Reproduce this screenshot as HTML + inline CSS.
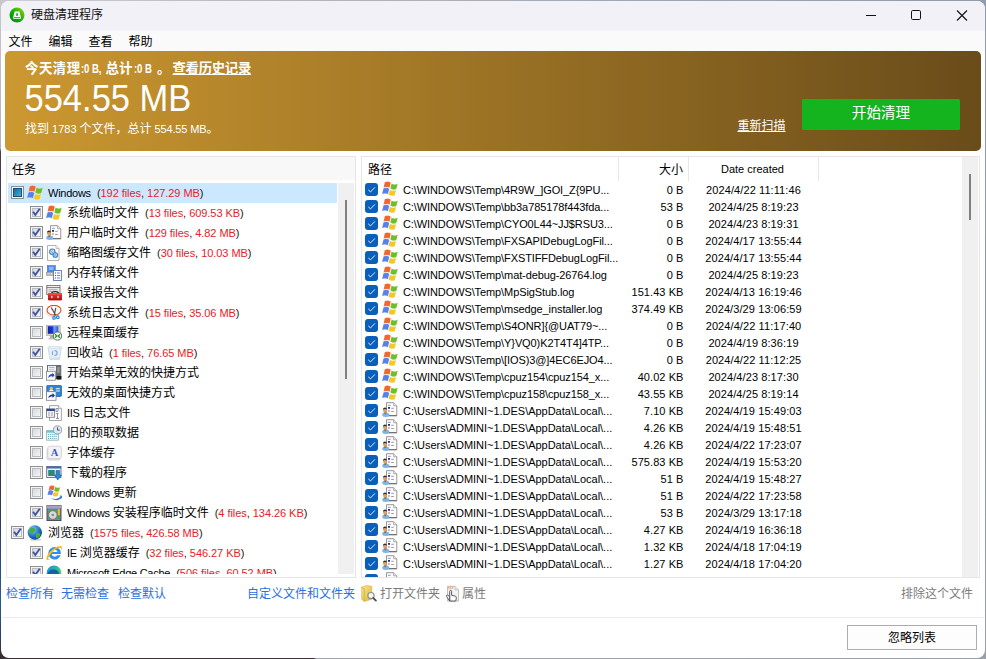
<!DOCTYPE html>
<html lang="zh-CN"><head><meta charset="utf-8"><title>硬盘清理程序</title>
<style>
html,body{margin:0;padding:0}
body{width:986px;height:659px;overflow:hidden;position:relative;background:#8e9cae;font-family:"Liberation Sans","Noto Sans CJK SC",sans-serif;font-size:12px;color:#000}
#bgt{position:absolute;left:0;top:0;width:986px;height:10px;background:linear-gradient(90deg,#cfcfd2 0,#b4b6bc 30%,#9aa4b6 70%,#8e9cb0 100%)}
#bgl{position:absolute;left:0;top:0;width:10px;height:659px;background:linear-gradient(180deg,#c8c8cc 0,#b2b2b6 148px,#4a3c48 152px,#3c3040 400px,#2c3a60 520px,#2a5a90 600px,#2c3c62 640px,#3a2e34 659px)}
#bgr{position:absolute;left:976px;top:10px;width:10px;height:649px;background:linear-gradient(180deg,#8e9cb0 0,#82969e 60%,#9aa0a6 100%)}
#bgb{position:absolute;left:0;top:649px;width:986px;height:10px;background:linear-gradient(90deg,#3a2e34 0,#40323a 314px,#a2a4aa 316px,#9aa0a8 100%)}
#win{position:absolute;left:1px;top:1px;width:984px;height:657px;background:#fff;border-radius:8px;overflow:hidden}
#win *{box-sizing:border-box}
.abs{position:absolute;white-space:nowrap}
#tb{left:0;top:0;width:984px;height:30px;background:#f3f1f8}
#mb{left:0;top:30px;width:984px;height:20px;background:#fafafa}
#title{left:30px;top:6px;font-size:12px;line-height:16px;color:#111}
.mi{margin-left:-.5px;top:33px;font-size:12px;line-height:16px}
#ban{left:4px;top:50px;width:976px;height:100px;border-radius:5px;background:linear-gradient(90deg,#cc9830,#6a4c1a);color:#fff}
.l{font-size:11px}
#b1{left:20px;top:10px;font-weight:bold;font-size:13.400px;line-height:16px}
#b1 span,#b1 a{position:absolute;top:0;white-space:nowrap}
#b1 .l{letter-spacing:-.1px;font-size:12px;transform:scaleX(.8);transform-origin:0 50%}
#b1 a{text-decoration:underline;letter-spacing:-.3px}
#b2{left:19.500px;top:28px;font-size:34.500px;line-height:40px;letter-spacing:0;transform:scaleY(1.09);transform-origin:0 80%}
#b3{left:20px;top:70px;font-size:12px;line-height:16px}
#rescan{left:732.500px;top:67px;font-size:12px;line-height:16px;text-decoration:underline}
#go{left:797px;top:48px;width:158px;height:31px;border-radius:1.500px;background:#14b41f;font-size:14.600px;line-height:29px;text-align:center}
.pane{border:1px solid #e6e6e6;background:#fff;overflow:hidden}
#lp{left:5px;top:155px;width:350px;height:422px}
#rp{left:360px;top:155px;width:619px;height:422px}
.ic{width:16px;height:16px;position:absolute;display:block}
.tr{position:absolute;left:1px;width:329px;height:20px;font-size:12px;line-height:20px}
.tr.sel{background:#cce8ff}
.tr .t{position:absolute;top:0;white-space:nowrap}
.tr .t>.l{letter-spacing:-.25px}
.tr .t>.cnt{color:#1a1a1a;letter-spacing:-.05px}
.red{color:#e8202a}
.cbl{position:absolute;top:3px;width:13px;height:13px;border:1px solid #8e8f8f;background:#f4f4f4}
.cbl:before{content:"";box-sizing:border-box;position:absolute;left:1px;top:1px;width:9px;height:9px;border:1px solid #b9bcc0;background:linear-gradient(135deg,#d6d9dc,#f4f5f6)}
.cbl svg{position:absolute;left:-1px;top:-1px}
.cbl .tri{position:absolute;left:1px;top:1px;width:9px;height:9px;background:linear-gradient(135deg,#1e6aa0,#3fb0d8);border:1px solid #1c4f78}
.fr{position:absolute;left:0;width:600px;height:17px;font-size:11px;line-height:17px}
.fr span{position:absolute;top:1px;white-space:nowrap}
.fr .p{letter-spacing:-.1px}
.fr .pu{letter-spacing:-.02px}
.fr .s{letter-spacing:.07px}
.fr .d{letter-spacing:.09px}
.cbr{position:absolute;left:3px;top:2px;width:13px;height:13px;border-radius:3px;background:#0a5fba}
.cbr svg{position:absolute;left:0;top:0}
.lnk{top:585px;font-size:12px;line-height:16px;color:#2a70df}
.gl{top:585px;font-size:12px;line-height:16px;color:#7c7c7c}
</style></head><body>
<div id="bgt"></div><div id="bgr"></div><div id="bgl"></div><div id="bgb"></div>
<div id="win">
<div id="tb" class="abs"></div>
<div id="mb" class="abs"></div>
<svg class="abs" style="left:8px;top:6px" width="17" height="17" viewBox="0 0 17 17"><defs><linearGradient id="ag" x1="0" y1="1" x2="1" y2="0"><stop offset="0" stop-color="#008a00"/><stop offset=".45" stop-color="#0faa08"/><stop offset="1" stop-color="#9ad80c"/></linearGradient></defs><circle cx="8" cy="8" r="7.500" fill="url(#ag)"/><path d="M5.600 4.400h4.900l1.500 6.600q.1.700-.6.700H4.700q-.7 0-.6-.7z" fill="#fff"/><path d="M7 8.700c-.3-.4.200-.7.300-1.200.1-1 .1-1.700.8-1.700s.7.700.8 1.700c.1.500.6.800.3 1.200z" fill="#12a80a"/><path d="M5 10.500h6.200" stroke="#12a80a" stroke-width=".8"/></svg>
<div id="title" class="abs">硬盘清理程序</div>
<svg class="abs" style="left:860px;top:5px" width="120" height="20" viewBox="0 0 120 20"><path d="M5 9.500h10" stroke="#111" stroke-width="1"/><rect x="50.500" y="4.500" width="9" height="9" rx="1.200" fill="none" stroke="#111"/><path d="M96 4.500l10 10M106 4.500l-10 10" stroke="#111" stroke-width="1.100"/></svg>
<div class="abs mi" style="left:8px">文件</div><div class="abs mi" style="left:48px">编辑</div><div class="abs mi" style="left:88px">查看</div><div class="abs mi" style="left:128px">帮助</div>
<div id="ban" class="abs">
<div id="b1" class="abs"><span style="left:0;letter-spacing:.5px">今天清理</span><span class="l" style="left:55.500px">:0 B,</span><span style="left:80.500px">总计</span><span class="l" style="left:109px">:0 B</span><span style="left:132px">。</span><a style="left:147.500px">查看历史记录</a></div>
<div id="b2" class="abs">554.55 MB</div>
<div id="b3" class="abs">找到<span class="l"> 1783 </span>个文件，总计<span class="l" style="letter-spacing:-.15px"> 554.55 MB</span>。</div>
<div id="rescan" class="abs">重新扫描</div>
<div id="go" class="abs">开始清理</div>
</div>

<div id="lp" class="abs pane">
<div class="abs" style="left:0;top:0;width:348px;height:23px;background:#f8f8f8"></div>
<div class="abs" style="left:5px;top:5px;font-size:12px;line-height:16px">任务</div>
<div class="abs" style="left:331px;top:26px;width:16px;height:391px;background:#f0f0f0"></div>
<div class="abs" style="left:338px;top:43px;width:2px;height:179px;background:#808080"></div>
<div class="tr sel" style="top:26px">
<span class="cbl" style="left:3px"><i class="tri"></i></span>
<svg class="ic" style="left:19px;top:2px" viewBox="0 0 16 16"><g stroke="#fff" stroke-opacity=".6" stroke-width=".3"><path d="M2.700 1.200C4.500.3 6.500.3 8.800 1.400L7.600 6.800C6 5.800 3.800 5.800 1.600 6.600z" fill="#f0662c"/><path d="M9.500 2.600C11.500 3.800 13.500 3.800 15.800 2.800L14.400 8C12.500 9 10.300 8.800 8.300 7.400z" fill="#6dbd2d"/><path d="M1.400 7.400C3.300 6.500 5.300 6.600 7.300 7.700L6 13.200C4.200 12.200 2 12.100 0 13z" fill="#5680ee"/><path d="M7.900 8.800C9.800 10 12 10 14.100 9L12.800 14.200C10.700 15.200 8.500 15 6.600 13.800z" fill="#f3c821"/></g></svg>
<span class="t" style="left:40px"><span class="l">Windows</span><span class="cnt l">&nbsp; (<span class="red">192 files</span>, <span class="red">127.29 MB</span>)</span></span>
</div>
<div class="tr" style="top:46px">
<span class="cbl" style="left:22px"><svg viewBox="0 0 13 13" width="13" height="13"><path d="M3.100 5.700L5.300 9 9.700 2.700" fill="none" stroke="#3d50a0" stroke-width="1.800"/></svg></span>
<svg class="ic" style="left:38px;top:2px" viewBox="0 0 16 16"><g stroke="#fff" stroke-opacity=".6" stroke-width=".3"><path d="M2.700 1.200C4.500.3 6.500.3 8.800 1.400L7.600 6.800C6 5.800 3.800 5.800 1.600 6.600z" fill="#f0662c"/><path d="M9.500 2.600C11.500 3.800 13.500 3.800 15.800 2.800L14.400 8C12.500 9 10.300 8.800 8.300 7.400z" fill="#6dbd2d"/><path d="M1.400 7.400C3.300 6.500 5.300 6.600 7.300 7.700L6 13.200C4.200 12.200 2 12.100 0 13z" fill="#5680ee"/><path d="M7.900 8.800C9.800 10 12 10 14.100 9L12.800 14.200C10.700 15.200 8.500 15 6.600 13.800z" fill="#f3c821"/></g></svg>
<span class="t" style="left:59px">系统临时文件<span class="cnt l">&nbsp; (<span class="red">13 files</span>, <span class="red">609.53 KB</span>)</span></span>
</div>
<div class="tr" style="top:66px">
<span class="cbl" style="left:22px"><svg viewBox="0 0 13 13" width="13" height="13"><path d="M3.100 5.700L5.300 9 9.700 2.700" fill="none" stroke="#3d50a0" stroke-width="1.800"/></svg></span>
<svg class="ic" style="left:38px;top:2px" viewBox="0 0 16 16"><path d="M4.500.7h7.200l3.100 3.100v9.900H4.500z" fill="#fff" stroke="#8a8a8a" stroke-width=".9"/><path d="M11.700.7v3.100h3.100" fill="#f1f1f1" stroke="#8a8a8a" stroke-width=".7"/><path d="M4.500 13.700h10.300" stroke="#5e5e5e" stroke-width=".9"/><path d="M6 3.300h2.800M9.200 6.300h2.600M9.200 9.500h1.800" stroke="#8a86b8" stroke-width=".9"/><path d="M11 9.500h1" stroke="#f0a020" stroke-width=".9"/><rect x="6" y="5" width="2" height="1.800" fill="#3a2a80"/><rect x="6" y="8.200" width="1.800" height="1.600" fill="#a8a6c8"/><ellipse cx="3.700" cy="12.700" rx="3.500" ry="2.200" fill="#7ab6ee"/><path d="M2.200 10h1.800l-.2 2.200-1.300-.3z" fill="#9a5a20"/><ellipse cx="3" cy="8.200" rx="1.900" ry="2.500" fill="#e0a264"/><path d="M1.100 7.700c-.2-2.700 3.800-2.900 3.900 0-1-1.100-2.800-1.100-3.900 0z" fill="#2a3038"/></svg>
<span class="t" style="left:59px">用户临时文件<span class="cnt l">&nbsp; (<span class="red">129 files</span>, <span class="red">4.82 MB</span>)</span></span>
</div>
<div class="tr" style="top:86px">
<span class="cbl" style="left:22px"><svg viewBox="0 0 13 13" width="13" height="13"><path d="M3.100 5.700L5.300 9 9.700 2.700" fill="none" stroke="#3d50a0" stroke-width="1.800"/></svg></span>
<svg class="ic" style="left:38px;top:2px" viewBox="0 0 16 16"><path d="M1.500.5h8.500l3 3v12h-11.500z" fill="#fdfdfd" stroke="#a9a9a9" stroke-width=".9"/><path d="M10 .5v3h3" fill="#f0f0f0" stroke="#a9a9a9" stroke-width=".7"/><circle cx="6.300" cy="6.700" r="2.700" fill="#d6e8f6" stroke="#3f7fbc" stroke-width="1.100"/><circle cx="9.300" cy="10" r="2.300" fill="#d6e8f6" stroke="#3f7fbc" stroke-width="1.100"/><circle cx="6.300" cy="6.700" r=".9" fill="#fff" stroke="#3f7fbc" stroke-width=".6"/><circle cx="9.300" cy="10" r=".8" fill="#fff" stroke="#3f7fbc" stroke-width=".6"/></svg>
<span class="t" style="left:59px">缩略图缓存文件<span class="cnt l">&nbsp; (<span class="red">30 files</span>, <span class="red">10.03 MB</span>)</span></span>
</div>
<div class="tr" style="top:106px">
<span class="cbl" style="left:22px"><svg viewBox="0 0 13 13" width="13" height="13"><path d="M3.100 5.700L5.300 9 9.700 2.700" fill="none" stroke="#3d50a0" stroke-width="1.800"/></svg></span>
<svg class="ic" style="left:38px;top:2px" viewBox="0 0 16 16"><rect x="1.500" y=".6" width="7.800" height="6.100" fill="#4a8af0" stroke="#3a6ac8" stroke-width=".6"/><rect x="3" y="1.800" width="4.500" height="3.200" fill="#8ab8fa"/><rect x=".6" y="7.300" width="9.400" height="3" fill="#aab2bc" stroke="#7a828c" stroke-width=".5"/><path d="M1.600 8.800h7.400" stroke="#fff" stroke-width=".9" stroke-dasharray="1 .7"/><rect x="7.500" y="5.500" width="7.900" height="10" fill="#fdfdfd" stroke="#5a7ab0" stroke-width=".9"/><path d="M9 8h1M9 10.500h1M9 13h1" stroke="#2a4ad0" stroke-width="1.100"/><path d="M11 8h3M11 10.500h3M11 13h3" stroke="#4a7ae0" stroke-width=".9"/></svg>
<span class="t" style="left:59px">内存转储文件</span>
</div>
<div class="tr" style="top:126px">
<span class="cbl" style="left:22px"><svg viewBox="0 0 13 13" width="13" height="13"><path d="M3.100 5.700L5.300 9 9.700 2.700" fill="none" stroke="#3d50a0" stroke-width="1.800"/></svg></span>
<svg class="ic" style="left:38px;top:2px" viewBox="0 0 16 16"><rect x=".8" y=".4" width="13.200" height="9.300" fill="#f2f2f2" stroke="#6e6e6e" stroke-width=".9"/><path d="M.8 2.600h13.200" stroke="#6e6e6e" stroke-width=".9"/><path d="M2.500 4.800h9M2.500 6.700h4" stroke="#8c8c8c" stroke-width=".8"/><path d="M5.700 8.300c0-2.200 6.700-2.200 6.700 0" fill="none" stroke="#1a1a1a" stroke-width="1.300"/><rect x="2" y="8" width="14" height="7.300" rx="1" fill="#d8201f"/><rect x="2" y="8" width="14" height="2.200" rx="1" fill="#ec4a40"/><rect x="2" y="13.300" width="14" height="2" rx="1" fill="#a81414"/><rect x="5" y="10.800" width="1.500" height="2.300" fill="#e8d8d8"/><rect x="11.300" y="10.800" width="1.500" height="2.300" fill="#e8d8d8"/></svg>
<span class="t" style="left:59px">错误报告文件</span>
</div>
<div class="tr" style="top:146px">
<span class="cbl" style="left:22px"><svg viewBox="0 0 13 13" width="13" height="13"><path d="M3.100 5.700L5.300 9 9.700 2.700" fill="none" stroke="#3d50a0" stroke-width="1.800"/></svg></span>
<svg class="ic" style="left:38px;top:2px" viewBox="0 0 16 16"><ellipse cx="7" cy="8" rx="6" ry="3.600" fill="none" stroke="#f0b8a8" stroke-width=".8"/><ellipse cx="8" cy="5.200" rx="7" ry="4.800" fill="#fff" fill-opacity=".7" stroke="#e04828" stroke-width="1.100"/><path d="M5.200 2.500l4.600 8M9.800 2.800l-1.600 7.700" stroke="#4e4e4e" stroke-width="1.200"/><circle cx="8" cy="12.900" r="1.300" fill="none" stroke="#1a80d0" stroke-width="1.100"/><circle cx="11.800" cy="12.200" r="1.300" fill="none" stroke="#1a80d0" stroke-width="1.100"/></svg>
<span class="t" style="left:59px">系统日志文件<span class="cnt l">&nbsp; (<span class="red">15 files</span>, <span class="red">35.06 MB</span>)</span></span>
</div>
<div class="tr" style="top:166px">
<span class="cbl" style="left:22px"></span>
<svg class="ic" style="left:38px;top:2px" viewBox="0 0 16 16"><defs><linearGradient id="rg" x1="0" y1="0" x2="1" y2="0"><stop offset="0" stop-color="#0c22b0"/><stop offset=".45" stop-color="#1a3ad0"/><stop offset=".6" stop-color="#7aa2ee"/><stop offset="1" stop-color="#2a5ad8"/></linearGradient></defs><rect x=".6" y=".3" width="13.600" height="10" fill="#d9d5c8" stroke="#a29a88" stroke-width=".6"/><rect x="1.800" y="1.200" width="10.600" height="7.600" fill="url(#rg)"/><rect x="4" y="10.300" width="4" height="3" fill="#a9a9a9"/><rect x="2.500" y="13" width="7" height="1.500" fill="#c2c2c2"/><circle cx="11.500" cy="11" r="4.100" fill="#f4f4f4" stroke="#606060" stroke-width=".9"/><path d="M9 9.300l1.800 1.700L9 12.700M14 9.300l-1.800 1.700 1.800 1.700" fill="none" stroke="#1a9a2a" stroke-width="1.200"/></svg>
<span class="t" style="left:59px">远程桌面缓存</span>
</div>
<div class="tr" style="top:186px">
<span class="cbl" style="left:22px"><svg viewBox="0 0 13 13" width="13" height="13"><path d="M3.100 5.700L5.300 9 9.700 2.700" fill="none" stroke="#3d50a0" stroke-width="1.800"/></svg></span>
<svg class="ic" style="left:38px;top:2px" viewBox="0 0 16 16"><path d="M2 2.200h13.400l-1.900 12.400H4z" fill="#e6eff8" stroke="#c3d3e3" stroke-width=".8"/><ellipse cx="8.700" cy="2.400" rx="6.700" ry=".9" fill="#f4f8fc" stroke="#c3d3e3" stroke-width=".6"/><path d="M4.200 13.200h9.200" stroke="#d3dfeb" stroke-width="1.400"/><circle cx="8.700" cy="8" r="2.400" fill="none" stroke="#7aaae2" stroke-width="1.200" stroke-dasharray="3.600 1.400"/></svg>
<span class="t" style="left:59px">回收站<span class="cnt l">&nbsp; (<span class="red">1 files</span>, <span class="red">76.65 MB</span>)</span></span>
</div>
<div class="tr" style="top:206px">
<span class="cbl" style="left:22px"></span>
<svg class="ic" style="left:38px;top:2px" viewBox="0 0 16 16"><rect x="1.500" y=".4" width="13.300" height="13" fill="#f3f3f3" stroke="#5e5e5e" stroke-width=".9"/><rect x="10" y=".4" width="4.800" height="13" fill="#636b74"/><path d="M3 2.500h5.500" stroke="#9ac0e8" stroke-width="1.200"/><path d="M3 4.500h5.500" stroke="#c8c8c8" stroke-width=".8"/><path d="M11.200 3h2.400M11.200 5h2.400M11.200 7h2.400" stroke="#d8dce0" stroke-width=".8"/><rect x=".4" y="6.300" width="8.900" height="8.900" fill="#fff" stroke="#7e7e7e" stroke-width=".8"/><path d="M2.300 13.300c0-3 1.600-4.200 4-4.200V7.600l2.300 2.600-2.300 2.600v-1.500c-1.800 0-3 .4-4 2z" fill="#2050c0"/><rect x="10.500" y="11" width="4.900" height="3.600" fill="#161616"/></svg>
<span class="t" style="left:59px">开始菜单无效的快捷方式</span>
</div>
<div class="tr" style="top:226px">
<span class="cbl" style="left:22px"></span>
<svg class="ic" style="left:38px;top:2px" viewBox="0 0 16 16"><rect x=".8" y=".4" width="14.600" height="11" rx=".8" fill="#2a86dc" stroke="#1a5aa2" stroke-width=".8"/><circle cx="5.300" cy="3.500" r="1.600" fill="#f8c060"/><path d="M3 6.300c0-2 4.600-2 4.600 0z" fill="#fff"/><path d="M9.800 3.800h4M9.800 6h4" stroke="#fff" stroke-width="1.100"/><rect x=".4" y="6.700" width="9.600" height="8.600" fill="#fff" stroke="#7e7e7e" stroke-width=".8"/><path d="M2.300 13.600c0-3 1.800-4.200 4.200-4.200V7.900l2.500 2.600-2.500 2.600v-1.500c-1.900 0-3.200.4-4.200 2z" fill="#1a3a9a"/></svg>
<span class="t" style="left:59px">无效的桌面快捷方式</span>
</div>
<div class="tr" style="top:246px">
<span class="cbl" style="left:22px"></span>
<svg class="ic" style="left:38px;top:2px" viewBox="0 0 16 16"><path d="M3.500.6h8.900l3 3v11.900H3.500z" fill="#fdfdfd" stroke="#9c9c9c" stroke-width=".9"/><path d="M12.400.6v3h3" fill="#f0f0f0" stroke="#9c9c9c" stroke-width=".7"/><path d="M10 3.500h2v3h-2zM10 8.500h2.500M11.500 8.500v5M10 13.500h3" fill="none" stroke="#8a80c0" stroke-width=".9"/><rect x=".6" y="3.900" width="8.100" height="8.300" fill="#fff" stroke="#5a5a6a" stroke-width=".7"/><rect x=".6" y="3.900" width="8.100" height="2.200" fill="#2a4a92"/><path d="M2 8h2.300M5 8h2.300M2 10h2.300M5 10h2.300" stroke="#8a8a8a" stroke-width=".9"/></svg>
<span class="t" style="left:59px"><span class="l">IIS </span>日志文件</span>
</div>
<div class="tr" style="top:266px">
<span class="cbl" style="left:22px"></span>
<svg class="ic" style="left:38px;top:2px" viewBox="0 0 16 16"><rect x=".6" y="5.500" width="11.800" height="9.700" fill="#eaf5f9" stroke="#8fb0c2" stroke-width=".8"/><rect x=".6" y="5.500" width="11.800" height="2.200" fill="#72c2d2"/><path d="M2 9.500h9M2 11.500h9M2 13.500h9" stroke="#58b4c6" stroke-width="1" stroke-dasharray="1.100 1"/><circle cx="11.500" cy="4.900" r="4.100" fill="#dbe8f4" stroke="#8a98a8" stroke-width=".9"/><path d="M11.500 2.300v2.800h2.200" fill="none" stroke="#3a4652" stroke-width=".9"/></svg>
<span class="t" style="left:59px">旧的预取数据</span>
</div>
<div class="tr" style="top:286px">
<span class="cbl" style="left:22px"></span>
<svg class="ic" style="left:38px;top:2px" viewBox="0 0 16 16"><rect x="1" y="3" width="13.200" height="12" rx="1.800" fill="#e6e6ea" stroke="#c6c6ce" stroke-width=".7"/><rect x="1.800" y="1.200" width="13.600" height="12.400" rx="2" fill="#f3f3f6" stroke="#c6c6ce" stroke-width=".7"/><text x="8.600" y="11.400" font-family="Liberation Serif, serif" font-weight="bold" font-size="10.500" text-anchor="middle" fill="#3a5ac8">A</text></svg>
<span class="t" style="left:59px">字体缓存</span>
</div>
<div class="tr" style="top:306px">
<span class="cbl" style="left:22px"></span>
<svg class="ic" style="left:38px;top:2px" viewBox="0 0 16 16"><rect x=".7" y="1.500" width="14.300" height="11" fill="#eef2f6" stroke="#5a6a8a" stroke-width=".9"/><rect x=".7" y="1.500" width="14.300" height="2" fill="#4a6ab0"/><rect x="2.200" y="5" width="6.500" height="6" fill="#2a8a7a"/><path d="M10 5.500h3.600v4.500h1.900L11.800 15 8.100 10H10z" fill="#2a86e0" stroke="#1a56a8" stroke-width=".6"/></svg>
<span class="t" style="left:59px">下载的程序</span>
</div>
<div class="tr" style="top:326px">
<span class="cbl" style="left:22px"></span>
<svg class="ic" style="left:38px;top:2px" viewBox="0 0 16 16"><path d="M3.700.9C5.100.2 6.700.2 8.500 1.100L7.600 5.300C6.300 4.500 4.600 4.500 2.800 5.100z" fill="#f0662c"/><path d="M9.100 2C10.700 3 12.300 3 14.100 2.200L13 6.300c-1.500.8-3.200.6-4.800-.5z" fill="#6dbd2d"/><path d="M2.600 5.800c1.500-.7 3.100-.6 4.700.2L6.200 10.300C4.800 9.500 3.100 9.400 1.500 10.100z" fill="#5680ee"/><path d="M7.800 6.900c1.500.9 3.200.9 4.900.2l-1 4c-1.700.8-3.400.600-4.900-.3z" fill="#f3c821"/><path d="M5.500 13c3.500 1.600 6.800 1 9-1.500l-.9-1 3 .2-.3 3.300-.9-1c-2.600 2.800-6.800 3-9.900 0z" fill="#2a7ade"/></svg>
<span class="t" style="left:59px"><span class="l">Windows </span>更新</span>
</div>
<div class="tr" style="top:346px">
<span class="cbl" style="left:22px"><svg viewBox="0 0 13 13" width="13" height="13"><path d="M3.100 5.700L5.300 9 9.700 2.700" fill="none" stroke="#3d50a0" stroke-width="1.800"/></svg></span>
<svg class="ic" style="left:38px;top:2px" viewBox="0 0 16 16"><rect x="1" y=".4" width="14" height="15.200" fill="#8a86a8" stroke="#3a3a4a" stroke-width=".9"/><rect x="1" y=".4" width="14" height="3" fill="#a6a2c6"/><rect x="2.200" y="4.200" width="11.600" height="10.200" fill="#4e9a62"/><rect x="11.800" y="4.200" width="2" height="6" fill="#f0c020"/><circle cx="6.800" cy="10" r="4.300" fill="#d9d9d9" stroke="#6e6e6e" stroke-width=".8"/><circle cx="6.800" cy="10" r="1.300" fill="#8a8a8a"/></svg>
<span class="t" style="left:59px"><span class="l">Windows </span>安装程序临时文件<span class="cnt l">&nbsp; (<span class="red">4 files</span>, <span class="red">134.26 KB</span>)</span></span>
</div>
<div class="tr" style="top:366px">
<span class="cbl" style="left:3px"><svg viewBox="0 0 13 13" width="13" height="13"><path d="M3.100 5.700L5.300 9 9.700 2.700" fill="none" stroke="#3d50a0" stroke-width="1.800"/></svg></span>
<svg class="ic" style="left:19px;top:2px" viewBox="0 0 16 16"><defs><radialGradient id="gg" cx=".35" cy=".3" r=".8"><stop offset="0" stop-color="#8fd0ff"/><stop offset=".55" stop-color="#1f74d8"/><stop offset="1" stop-color="#0a3488"/></radialGradient></defs><ellipse cx="8.500" cy="14.600" rx="6" ry="1.200" fill="#000" fill-opacity=".18"/><circle cx="7.800" cy="7.500" r="7.200" fill="url(#gg)"/><path d="M3.200 3.500c2-1.500 4-.8 4.800.5s-.6 2.300-1.600 3.300-1.400 2.600-2.600 2S1.700 5 3.200 3.500zM9.300 8c1.700-.6 4 0 4 1.600s-1.500 3.700-3.100 3.700-1.700-2.300-.9-5.300zM9.500 1.500c1.500 0 3 1 3.500 2-1 .3-2.500 0-3.500-2z" fill="#46ae34"/></svg>
<span class="t" style="left:40px">浏览器<span class="cnt l">&nbsp; (<span class="red">1575 files</span>, <span class="red">426.58 MB</span>)</span></span>
</div>
<div class="tr" style="top:386px">
<span class="cbl" style="left:22px"><svg viewBox="0 0 13 13" width="13" height="13"><path d="M3.100 5.700L5.300 9 9.700 2.700" fill="none" stroke="#3d50a0" stroke-width="1.800"/></svg></span>
<svg class="ic" style="left:38px;top:2px" viewBox="0 0 16 16"><path d="M8.600 2a6.300 6.300 0 1 0 6 8.300h-3.400a3.100 3.100 0 0 1-5.600-1.300h9.300A6.300 6.300 0 0 0 8.600 2zM5.600 7a3.100 3.100 0 0 1 6 0z" fill="#2a90ea"/><path d="M.9 14.800c-1.500-2.100 1.100-7.100 5.500-10.400S15.500.2 16 1.900c.3 1.100-.3 2.500-1 3.600.3-1.300.3-2.500-.7-2.700C12.400 2.500 8.400 4.600 5.700 7.900s-4.200 5.500-3.200 6.200c.8.500 2.200-.2 3.300-1.100-1.600 1.600-4 2.700-4.900 1.800z" fill="#f6ba1e"/></svg>
<span class="t" style="left:59px"><span class="l">IE </span>浏览器缓存<span class="cnt l">&nbsp; (<span class="red">32 files</span>, <span class="red">546.27 KB</span>)</span></span>
</div>
<div class="tr" style="top:406px">
<span class="cbl" style="left:22px"><svg viewBox="0 0 13 13" width="13" height="13"><path d="M3.100 5.700L5.300 9 9.700 2.700" fill="none" stroke="#3d50a0" stroke-width="1.800"/></svg></span>
<svg class="ic" style="left:38px;top:2px" viewBox="0 0 16 16"><defs><linearGradient id="eg" x1="0" y1="0" x2="1" y2=".6"><stop offset="0" stop-color="#1a8ad8"/><stop offset=".6" stop-color="#2ab8b0"/><stop offset="1" stop-color="#5ad06a"/></linearGradient></defs><circle cx="8" cy="8" r="7.400" fill="url(#eg)"/><path d="M1.500 10c0-3.500 3-5.500 6-5.500s5.500 1.500 5.500 4c0 1.500-1 2.500-2.500 2.500S8.500 10 9 9c-2-.5-3 1-2.500 3s2.500 3 4.500 2.500C7 17 1.500 14 1.500 10z" fill="#0b4f94" opacity=".8"/></svg>
<span class="t" style="left:59px"><span class="l">Microsoft Edge Cache</span><span class="cnt l">&nbsp; (<span class="red">506 files</span>, <span class="red">60.52 MB</span>)</span></span>
</div>
<div class="abs" style="left:0;top:417px;width:348px;height:3px;background:#fff"></div>
</div>
<div id="rp" class="abs pane">
<div class="abs" style="left:6px;top:5px;font-size:12px;line-height:16px">路径</div>
<div class="abs" style="left:297px;top:5px;font-size:12px;line-height:16px">大小</div>
<div class="abs" style="left:325.500px;top:4px;width:130px;text-align:center;font-size:11px;line-height:16px">Date created</div>
<div class="abs" style="left:256px;top:0;width:1px;height:24px;background:#e8e8e8"></div>
<div class="abs" style="left:326px;top:0;width:1px;height:24px;background:#e8e8e8"></div>
<div class="abs" style="left:456px;top:0;width:1px;height:24px;background:#e8e8e8"></div>
<div class="abs" style="left:600px;top:0;width:16px;height:420px;background:#f0f0f0"></div>
<div class="abs" style="left:607px;top:17px;width:2px;height:46px;background:#808080"></div>
<div class="fr" style="top:24px">
<i class="cbr"><svg width="13" height="13" viewBox="0 0 13 13"><path d="M3.300 6.900L5.500 8.900 9.900 4.400" fill="none" stroke="#fff" stroke-opacity=".92" stroke-width=".95"/></svg></i>
<svg class="ic" style="left:20px;top:0" viewBox="0 0 16 16"><g stroke="#fff" stroke-opacity=".6" stroke-width=".3"><path d="M2.700 1.200C4.500.3 6.500.3 8.800 1.400L7.600 6.800C6 5.800 3.800 5.800 1.600 6.600z" fill="#f0662c"/><path d="M9.500 2.600C11.500 3.800 13.500 3.800 15.800 2.800L14.400 8C12.500 9 10.300 8.800 8.300 7.400z" fill="#6dbd2d"/><path d="M1.400 7.400C3.300 6.500 5.300 6.600 7.300 7.700L6 13.200C4.200 12.200 2 12.100 0 13z" fill="#5680ee"/><path d="M7.900 8.800C9.800 10 12 10 14.100 9L12.800 14.200C10.700 15.200 8.500 15 6.600 13.800z" fill="#f3c821"/></g></svg>
<span class="p" style="left:41px">C:\WINDOWS\Temp\4R9W_]GOI_Z{9PU...</span>
<span class="s" style="right:278.500px">0 B</span>
<span class="d" style="left:326.500px;width:130px;text-align:center">2024/4/22 11:11:46</span>
</div>
<div class="fr" style="top:41px">
<i class="cbr"><svg width="13" height="13" viewBox="0 0 13 13"><path d="M3.300 6.900L5.500 8.900 9.900 4.400" fill="none" stroke="#fff" stroke-opacity=".92" stroke-width=".95"/></svg></i>
<svg class="ic" style="left:20px;top:0" viewBox="0 0 16 16"><g stroke="#fff" stroke-opacity=".6" stroke-width=".3"><path d="M2.700 1.200C4.500.3 6.500.3 8.800 1.400L7.600 6.800C6 5.800 3.800 5.800 1.600 6.600z" fill="#f0662c"/><path d="M9.500 2.600C11.500 3.800 13.500 3.800 15.800 2.800L14.400 8C12.500 9 10.300 8.800 8.300 7.400z" fill="#6dbd2d"/><path d="M1.400 7.400C3.300 6.500 5.300 6.600 7.300 7.700L6 13.200C4.200 12.200 2 12.100 0 13z" fill="#5680ee"/><path d="M7.900 8.800C9.800 10 12 10 14.100 9L12.800 14.200C10.700 15.200 8.500 15 6.600 13.800z" fill="#f3c821"/></g></svg>
<span class="p" style="left:41px">C:\WINDOWS\Temp\bb3a785178f443fda...</span>
<span class="s" style="right:278.500px">53 B</span>
<span class="d" style="left:326.500px;width:130px;text-align:center">2024/4/25 8:19:23</span>
</div>
<div class="fr" style="top:58px">
<i class="cbr"><svg width="13" height="13" viewBox="0 0 13 13"><path d="M3.300 6.900L5.500 8.900 9.900 4.400" fill="none" stroke="#fff" stroke-opacity=".92" stroke-width=".95"/></svg></i>
<svg class="ic" style="left:20px;top:0" viewBox="0 0 16 16"><g stroke="#fff" stroke-opacity=".6" stroke-width=".3"><path d="M2.700 1.200C4.500.3 6.500.3 8.800 1.400L7.600 6.800C6 5.800 3.800 5.800 1.600 6.600z" fill="#f0662c"/><path d="M9.500 2.600C11.500 3.800 13.500 3.800 15.800 2.800L14.400 8C12.500 9 10.300 8.800 8.300 7.400z" fill="#6dbd2d"/><path d="M1.400 7.400C3.300 6.500 5.300 6.600 7.300 7.700L6 13.200C4.200 12.200 2 12.100 0 13z" fill="#5680ee"/><path d="M7.900 8.800C9.800 10 12 10 14.100 9L12.800 14.200C10.700 15.200 8.500 15 6.600 13.800z" fill="#f3c821"/></g></svg>
<span class="p" style="left:41px">C:\WINDOWS\Temp\CYO0L44~JJ$RSU3...</span>
<span class="s" style="right:278.500px">0 B</span>
<span class="d" style="left:326.500px;width:130px;text-align:center">2024/4/23 8:19:31</span>
</div>
<div class="fr" style="top:75px">
<i class="cbr"><svg width="13" height="13" viewBox="0 0 13 13"><path d="M3.300 6.900L5.500 8.900 9.900 4.400" fill="none" stroke="#fff" stroke-opacity=".92" stroke-width=".95"/></svg></i>
<svg class="ic" style="left:20px;top:0" viewBox="0 0 16 16"><g stroke="#fff" stroke-opacity=".6" stroke-width=".3"><path d="M2.700 1.200C4.500.3 6.500.3 8.800 1.400L7.600 6.800C6 5.800 3.800 5.800 1.600 6.600z" fill="#f0662c"/><path d="M9.500 2.600C11.500 3.800 13.500 3.800 15.800 2.800L14.400 8C12.500 9 10.300 8.800 8.300 7.400z" fill="#6dbd2d"/><path d="M1.400 7.400C3.300 6.500 5.300 6.600 7.300 7.700L6 13.200C4.200 12.200 2 12.100 0 13z" fill="#5680ee"/><path d="M7.900 8.800C9.800 10 12 10 14.100 9L12.800 14.200C10.700 15.200 8.500 15 6.600 13.800z" fill="#f3c821"/></g></svg>
<span class="p" style="left:41px">C:\WINDOWS\Temp\FXSAPIDebugLogFil...</span>
<span class="s" style="right:278.500px">0 B</span>
<span class="d" style="left:326.500px;width:130px;text-align:center">2024/4/17 13:55:44</span>
</div>
<div class="fr" style="top:92px">
<i class="cbr"><svg width="13" height="13" viewBox="0 0 13 13"><path d="M3.300 6.900L5.500 8.900 9.900 4.400" fill="none" stroke="#fff" stroke-opacity=".92" stroke-width=".95"/></svg></i>
<svg class="ic" style="left:20px;top:0" viewBox="0 0 16 16"><g stroke="#fff" stroke-opacity=".6" stroke-width=".3"><path d="M2.700 1.200C4.500.3 6.500.3 8.800 1.400L7.600 6.800C6 5.800 3.800 5.800 1.600 6.600z" fill="#f0662c"/><path d="M9.500 2.600C11.500 3.800 13.500 3.800 15.800 2.800L14.400 8C12.500 9 10.300 8.800 8.300 7.400z" fill="#6dbd2d"/><path d="M1.400 7.400C3.300 6.500 5.300 6.600 7.300 7.700L6 13.200C4.200 12.200 2 12.100 0 13z" fill="#5680ee"/><path d="M7.900 8.800C9.800 10 12 10 14.100 9L12.800 14.200C10.700 15.200 8.500 15 6.600 13.800z" fill="#f3c821"/></g></svg>
<span class="p" style="left:41px">C:\WINDOWS\Temp\FXSTIFFDebugLogFil...</span>
<span class="s" style="right:278.500px">0 B</span>
<span class="d" style="left:326.500px;width:130px;text-align:center">2024/4/17 13:55:44</span>
</div>
<div class="fr" style="top:109px">
<i class="cbr"><svg width="13" height="13" viewBox="0 0 13 13"><path d="M3.300 6.900L5.500 8.900 9.900 4.400" fill="none" stroke="#fff" stroke-opacity=".92" stroke-width=".95"/></svg></i>
<svg class="ic" style="left:20px;top:0" viewBox="0 0 16 16"><g stroke="#fff" stroke-opacity=".6" stroke-width=".3"><path d="M2.700 1.200C4.500.3 6.500.3 8.800 1.400L7.600 6.800C6 5.800 3.800 5.800 1.600 6.600z" fill="#f0662c"/><path d="M9.500 2.600C11.500 3.800 13.500 3.800 15.800 2.800L14.400 8C12.500 9 10.300 8.800 8.300 7.400z" fill="#6dbd2d"/><path d="M1.400 7.400C3.300 6.500 5.300 6.600 7.300 7.700L6 13.200C4.200 12.200 2 12.100 0 13z" fill="#5680ee"/><path d="M7.900 8.800C9.800 10 12 10 14.100 9L12.800 14.200C10.700 15.200 8.500 15 6.600 13.800z" fill="#f3c821"/></g></svg>
<span class="p" style="left:41px">C:\WINDOWS\Temp\mat-debug-26764.log</span>
<span class="s" style="right:278.500px">0 B</span>
<span class="d" style="left:326.500px;width:130px;text-align:center">2024/4/25 8:19:23</span>
</div>
<div class="fr" style="top:126px">
<i class="cbr"><svg width="13" height="13" viewBox="0 0 13 13"><path d="M3.300 6.900L5.500 8.900 9.900 4.400" fill="none" stroke="#fff" stroke-opacity=".92" stroke-width=".95"/></svg></i>
<svg class="ic" style="left:20px;top:0" viewBox="0 0 16 16"><g stroke="#fff" stroke-opacity=".6" stroke-width=".3"><path d="M2.700 1.200C4.500.3 6.500.3 8.800 1.400L7.600 6.800C6 5.800 3.800 5.800 1.600 6.600z" fill="#f0662c"/><path d="M9.500 2.600C11.500 3.800 13.500 3.800 15.800 2.800L14.400 8C12.500 9 10.300 8.800 8.300 7.400z" fill="#6dbd2d"/><path d="M1.400 7.400C3.300 6.500 5.300 6.600 7.300 7.700L6 13.200C4.200 12.200 2 12.100 0 13z" fill="#5680ee"/><path d="M7.900 8.800C9.800 10 12 10 14.100 9L12.800 14.200C10.700 15.200 8.500 15 6.600 13.800z" fill="#f3c821"/></g></svg>
<span class="p" style="left:41px">C:\WINDOWS\Temp\MpSigStub.log</span>
<span class="s" style="right:278.500px">151.43 KB</span>
<span class="d" style="left:326.500px;width:130px;text-align:center">2024/4/13 16:19:46</span>
</div>
<div class="fr" style="top:143px">
<i class="cbr"><svg width="13" height="13" viewBox="0 0 13 13"><path d="M3.300 6.900L5.500 8.900 9.900 4.400" fill="none" stroke="#fff" stroke-opacity=".92" stroke-width=".95"/></svg></i>
<svg class="ic" style="left:20px;top:0" viewBox="0 0 16 16"><g stroke="#fff" stroke-opacity=".6" stroke-width=".3"><path d="M2.700 1.200C4.500.3 6.500.3 8.800 1.400L7.600 6.800C6 5.800 3.800 5.800 1.600 6.600z" fill="#f0662c"/><path d="M9.500 2.600C11.500 3.800 13.500 3.800 15.800 2.800L14.400 8C12.500 9 10.300 8.800 8.300 7.400z" fill="#6dbd2d"/><path d="M1.400 7.400C3.300 6.500 5.300 6.600 7.300 7.700L6 13.200C4.200 12.200 2 12.100 0 13z" fill="#5680ee"/><path d="M7.900 8.800C9.800 10 12 10 14.100 9L12.800 14.200C10.700 15.200 8.500 15 6.600 13.800z" fill="#f3c821"/></g></svg>
<span class="p" style="left:41px">C:\WINDOWS\Temp\msedge_installer.log</span>
<span class="s" style="right:278.500px">374.49 KB</span>
<span class="d" style="left:326.500px;width:130px;text-align:center">2024/3/29 13:06:59</span>
</div>
<div class="fr" style="top:160px">
<i class="cbr"><svg width="13" height="13" viewBox="0 0 13 13"><path d="M3.300 6.900L5.500 8.900 9.900 4.400" fill="none" stroke="#fff" stroke-opacity=".92" stroke-width=".95"/></svg></i>
<svg class="ic" style="left:20px;top:0" viewBox="0 0 16 16"><g stroke="#fff" stroke-opacity=".6" stroke-width=".3"><path d="M2.700 1.200C4.500.3 6.500.3 8.800 1.400L7.600 6.800C6 5.800 3.800 5.800 1.600 6.600z" fill="#f0662c"/><path d="M9.500 2.600C11.500 3.800 13.500 3.800 15.800 2.800L14.400 8C12.500 9 10.300 8.800 8.300 7.400z" fill="#6dbd2d"/><path d="M1.400 7.400C3.300 6.500 5.300 6.600 7.300 7.700L6 13.200C4.200 12.200 2 12.100 0 13z" fill="#5680ee"/><path d="M7.900 8.800C9.800 10 12 10 14.100 9L12.800 14.200C10.700 15.200 8.500 15 6.600 13.800z" fill="#f3c821"/></g></svg>
<span class="p" style="left:41px">C:\WINDOWS\Temp\S4ONR]{@UAT79~...</span>
<span class="s" style="right:278.500px">0 B</span>
<span class="d" style="left:326.500px;width:130px;text-align:center">2024/4/22 11:17:40</span>
</div>
<div class="fr" style="top:177px">
<i class="cbr"><svg width="13" height="13" viewBox="0 0 13 13"><path d="M3.300 6.900L5.500 8.900 9.900 4.400" fill="none" stroke="#fff" stroke-opacity=".92" stroke-width=".95"/></svg></i>
<svg class="ic" style="left:20px;top:0" viewBox="0 0 16 16"><g stroke="#fff" stroke-opacity=".6" stroke-width=".3"><path d="M2.700 1.200C4.500.3 6.500.3 8.800 1.400L7.600 6.800C6 5.800 3.800 5.800 1.600 6.600z" fill="#f0662c"/><path d="M9.500 2.600C11.500 3.800 13.500 3.800 15.800 2.800L14.400 8C12.500 9 10.300 8.800 8.300 7.400z" fill="#6dbd2d"/><path d="M1.400 7.400C3.300 6.500 5.300 6.600 7.300 7.700L6 13.200C4.200 12.200 2 12.100 0 13z" fill="#5680ee"/><path d="M7.900 8.800C9.800 10 12 10 14.100 9L12.800 14.200C10.700 15.200 8.500 15 6.600 13.800z" fill="#f3c821"/></g></svg>
<span class="p" style="left:41px">C:\WINDOWS\Temp\Y}VQ0)K2T4T4]4TP...</span>
<span class="s" style="right:278.500px">0 B</span>
<span class="d" style="left:326.500px;width:130px;text-align:center">2024/4/19 8:36:19</span>
</div>
<div class="fr" style="top:194px">
<i class="cbr"><svg width="13" height="13" viewBox="0 0 13 13"><path d="M3.300 6.900L5.500 8.900 9.900 4.400" fill="none" stroke="#fff" stroke-opacity=".92" stroke-width=".95"/></svg></i>
<svg class="ic" style="left:20px;top:0" viewBox="0 0 16 16"><g stroke="#fff" stroke-opacity=".6" stroke-width=".3"><path d="M2.700 1.200C4.500.3 6.500.3 8.800 1.400L7.600 6.800C6 5.800 3.800 5.800 1.600 6.600z" fill="#f0662c"/><path d="M9.500 2.600C11.500 3.800 13.500 3.800 15.800 2.800L14.400 8C12.500 9 10.300 8.800 8.300 7.400z" fill="#6dbd2d"/><path d="M1.400 7.400C3.300 6.500 5.300 6.600 7.300 7.700L6 13.200C4.200 12.200 2 12.100 0 13z" fill="#5680ee"/><path d="M7.900 8.800C9.800 10 12 10 14.100 9L12.800 14.200C10.700 15.200 8.500 15 6.600 13.800z" fill="#f3c821"/></g></svg>
<span class="p" style="left:41px">C:\WINDOWS\Temp\[IOS)3@]4EC6EJO4...</span>
<span class="s" style="right:278.500px">0 B</span>
<span class="d" style="left:326.500px;width:130px;text-align:center">2024/4/22 11:12:25</span>
</div>
<div class="fr" style="top:211px">
<i class="cbr"><svg width="13" height="13" viewBox="0 0 13 13"><path d="M3.300 6.900L5.500 8.900 9.900 4.400" fill="none" stroke="#fff" stroke-opacity=".92" stroke-width=".95"/></svg></i>
<svg class="ic" style="left:20px;top:0" viewBox="0 0 16 16"><g stroke="#fff" stroke-opacity=".6" stroke-width=".3"><path d="M2.700 1.200C4.500.3 6.500.3 8.800 1.400L7.600 6.800C6 5.800 3.800 5.800 1.600 6.600z" fill="#f0662c"/><path d="M9.500 2.600C11.500 3.800 13.500 3.800 15.800 2.800L14.400 8C12.500 9 10.300 8.800 8.300 7.400z" fill="#6dbd2d"/><path d="M1.400 7.400C3.300 6.500 5.300 6.600 7.300 7.700L6 13.200C4.200 12.200 2 12.100 0 13z" fill="#5680ee"/><path d="M7.900 8.800C9.800 10 12 10 14.100 9L12.800 14.200C10.700 15.200 8.500 15 6.600 13.800z" fill="#f3c821"/></g></svg>
<span class="p" style="left:41px">C:\WINDOWS\Temp\cpuz154\cpuz154_x...</span>
<span class="s" style="right:278.500px">40.02 KB</span>
<span class="d" style="left:326.500px;width:130px;text-align:center">2024/4/23 8:17:30</span>
</div>
<div class="fr" style="top:228px">
<i class="cbr"><svg width="13" height="13" viewBox="0 0 13 13"><path d="M3.300 6.900L5.500 8.900 9.900 4.400" fill="none" stroke="#fff" stroke-opacity=".92" stroke-width=".95"/></svg></i>
<svg class="ic" style="left:20px;top:0" viewBox="0 0 16 16"><g stroke="#fff" stroke-opacity=".6" stroke-width=".3"><path d="M2.700 1.200C4.500.3 6.500.3 8.800 1.400L7.600 6.800C6 5.800 3.800 5.800 1.600 6.600z" fill="#f0662c"/><path d="M9.500 2.600C11.500 3.800 13.500 3.800 15.800 2.800L14.400 8C12.500 9 10.300 8.800 8.300 7.400z" fill="#6dbd2d"/><path d="M1.400 7.400C3.300 6.500 5.300 6.600 7.300 7.700L6 13.200C4.200 12.200 2 12.100 0 13z" fill="#5680ee"/><path d="M7.900 8.800C9.800 10 12 10 14.100 9L12.800 14.200C10.700 15.200 8.500 15 6.600 13.800z" fill="#f3c821"/></g></svg>
<span class="p" style="left:41px">C:\WINDOWS\Temp\cpuz158\cpuz158_x...</span>
<span class="s" style="right:278.500px">43.55 KB</span>
<span class="d" style="left:326.500px;width:130px;text-align:center">2024/4/25 8:19:14</span>
</div>
<div class="fr" style="top:245px">
<i class="cbr"><svg width="13" height="13" viewBox="0 0 13 13"><path d="M3.300 6.900L5.500 8.900 9.900 4.400" fill="none" stroke="#fff" stroke-opacity=".92" stroke-width=".95"/></svg></i>
<svg class="ic" style="left:20px;top:0" viewBox="0 0 16 16"><path d="M4.500.7h7.200l3.100 3.100v9.900H4.500z" fill="#fff" stroke="#8a8a8a" stroke-width=".9"/><path d="M11.700.7v3.100h3.100" fill="#f1f1f1" stroke="#8a8a8a" stroke-width=".7"/><path d="M4.500 13.700h10.300" stroke="#5e5e5e" stroke-width=".9"/><path d="M6 3.300h2.800M9.200 6.300h2.600M9.200 9.500h1.800" stroke="#8a86b8" stroke-width=".9"/><path d="M11 9.500h1" stroke="#f0a020" stroke-width=".9"/><rect x="6" y="5" width="2" height="1.800" fill="#3a2a80"/><rect x="6" y="8.200" width="1.800" height="1.600" fill="#a8a6c8"/><ellipse cx="3.700" cy="12.700" rx="3.500" ry="2.200" fill="#7ab6ee"/><path d="M2.200 10h1.800l-.2 2.200-1.300-.3z" fill="#9a5a20"/><ellipse cx="3" cy="8.200" rx="1.900" ry="2.500" fill="#e0a264"/><path d="M1.100 7.700c-.2-2.700 3.800-2.900 3.900 0-1-1.100-2.800-1.100-3.900 0z" fill="#2a3038"/></svg>
<span class="pu" style="left:41px">C:\Users\ADMINI~1.DES\AppData\Local\...</span>
<span class="s" style="right:278.500px">7.10 KB</span>
<span class="d" style="left:326.500px;width:130px;text-align:center">2024/4/19 15:49:03</span>
</div>
<div class="fr" style="top:262px">
<i class="cbr"><svg width="13" height="13" viewBox="0 0 13 13"><path d="M3.300 6.900L5.500 8.900 9.900 4.400" fill="none" stroke="#fff" stroke-opacity=".92" stroke-width=".95"/></svg></i>
<svg class="ic" style="left:20px;top:0" viewBox="0 0 16 16"><path d="M4.500.7h7.200l3.100 3.100v9.900H4.500z" fill="#fff" stroke="#8a8a8a" stroke-width=".9"/><path d="M11.700.7v3.100h3.100" fill="#f1f1f1" stroke="#8a8a8a" stroke-width=".7"/><path d="M4.500 13.700h10.300" stroke="#5e5e5e" stroke-width=".9"/><path d="M6 3.300h2.800M9.200 6.300h2.600M9.200 9.500h1.800" stroke="#8a86b8" stroke-width=".9"/><path d="M11 9.500h1" stroke="#f0a020" stroke-width=".9"/><rect x="6" y="5" width="2" height="1.800" fill="#3a2a80"/><rect x="6" y="8.200" width="1.800" height="1.600" fill="#a8a6c8"/><ellipse cx="3.700" cy="12.700" rx="3.500" ry="2.200" fill="#7ab6ee"/><path d="M2.200 10h1.800l-.2 2.200-1.300-.3z" fill="#9a5a20"/><ellipse cx="3" cy="8.200" rx="1.900" ry="2.500" fill="#e0a264"/><path d="M1.100 7.700c-.2-2.700 3.800-2.900 3.900 0-1-1.100-2.800-1.100-3.900 0z" fill="#2a3038"/></svg>
<span class="pu" style="left:41px">C:\Users\ADMINI~1.DES\AppData\Local\...</span>
<span class="s" style="right:278.500px">4.26 KB</span>
<span class="d" style="left:326.500px;width:130px;text-align:center">2024/4/19 15:48:51</span>
</div>
<div class="fr" style="top:279px">
<i class="cbr"><svg width="13" height="13" viewBox="0 0 13 13"><path d="M3.300 6.900L5.500 8.900 9.900 4.400" fill="none" stroke="#fff" stroke-opacity=".92" stroke-width=".95"/></svg></i>
<svg class="ic" style="left:20px;top:0" viewBox="0 0 16 16"><path d="M4.500.7h7.200l3.100 3.100v9.900H4.500z" fill="#fff" stroke="#8a8a8a" stroke-width=".9"/><path d="M11.700.7v3.100h3.100" fill="#f1f1f1" stroke="#8a8a8a" stroke-width=".7"/><path d="M4.500 13.700h10.300" stroke="#5e5e5e" stroke-width=".9"/><path d="M6 3.300h2.800M9.200 6.300h2.600M9.200 9.500h1.800" stroke="#8a86b8" stroke-width=".9"/><path d="M11 9.500h1" stroke="#f0a020" stroke-width=".9"/><rect x="6" y="5" width="2" height="1.800" fill="#3a2a80"/><rect x="6" y="8.200" width="1.800" height="1.600" fill="#a8a6c8"/><ellipse cx="3.700" cy="12.700" rx="3.500" ry="2.200" fill="#7ab6ee"/><path d="M2.200 10h1.800l-.2 2.200-1.300-.3z" fill="#9a5a20"/><ellipse cx="3" cy="8.200" rx="1.900" ry="2.500" fill="#e0a264"/><path d="M1.100 7.700c-.2-2.700 3.800-2.900 3.900 0-1-1.100-2.800-1.100-3.900 0z" fill="#2a3038"/></svg>
<span class="pu" style="left:41px">C:\Users\ADMINI~1.DES\AppData\Local\...</span>
<span class="s" style="right:278.500px">4.26 KB</span>
<span class="d" style="left:326.500px;width:130px;text-align:center">2024/4/22 17:23:07</span>
</div>
<div class="fr" style="top:296px">
<i class="cbr"><svg width="13" height="13" viewBox="0 0 13 13"><path d="M3.300 6.900L5.500 8.900 9.900 4.400" fill="none" stroke="#fff" stroke-opacity=".92" stroke-width=".95"/></svg></i>
<svg class="ic" style="left:20px;top:0" viewBox="0 0 16 16"><path d="M4.500.7h7.200l3.100 3.100v9.900H4.500z" fill="#fff" stroke="#8a8a8a" stroke-width=".9"/><path d="M11.700.7v3.100h3.100" fill="#f1f1f1" stroke="#8a8a8a" stroke-width=".7"/><path d="M4.500 13.700h10.300" stroke="#5e5e5e" stroke-width=".9"/><path d="M6 3.300h2.800M9.200 6.300h2.600M9.200 9.500h1.800" stroke="#8a86b8" stroke-width=".9"/><path d="M11 9.500h1" stroke="#f0a020" stroke-width=".9"/><rect x="6" y="5" width="2" height="1.800" fill="#3a2a80"/><rect x="6" y="8.200" width="1.800" height="1.600" fill="#a8a6c8"/><ellipse cx="3.700" cy="12.700" rx="3.500" ry="2.200" fill="#7ab6ee"/><path d="M2.200 10h1.800l-.2 2.200-1.300-.3z" fill="#9a5a20"/><ellipse cx="3" cy="8.200" rx="1.900" ry="2.500" fill="#e0a264"/><path d="M1.100 7.700c-.2-2.700 3.800-2.900 3.900 0-1-1.100-2.800-1.100-3.900 0z" fill="#2a3038"/></svg>
<span class="pu" style="left:41px">C:\Users\ADMINI~1.DES\AppData\Local\...</span>
<span class="s" style="right:278.500px">575.83 KB</span>
<span class="d" style="left:326.500px;width:130px;text-align:center">2024/4/19 15:53:20</span>
</div>
<div class="fr" style="top:313px">
<i class="cbr"><svg width="13" height="13" viewBox="0 0 13 13"><path d="M3.300 6.900L5.500 8.900 9.900 4.400" fill="none" stroke="#fff" stroke-opacity=".92" stroke-width=".95"/></svg></i>
<svg class="ic" style="left:20px;top:0" viewBox="0 0 16 16"><path d="M4.500.7h7.200l3.100 3.100v9.900H4.500z" fill="#fff" stroke="#8a8a8a" stroke-width=".9"/><path d="M11.700.7v3.100h3.100" fill="#f1f1f1" stroke="#8a8a8a" stroke-width=".7"/><path d="M4.500 13.700h10.300" stroke="#5e5e5e" stroke-width=".9"/><path d="M6 3.300h2.800M9.200 6.300h2.600M9.200 9.500h1.800" stroke="#8a86b8" stroke-width=".9"/><path d="M11 9.500h1" stroke="#f0a020" stroke-width=".9"/><rect x="6" y="5" width="2" height="1.800" fill="#3a2a80"/><rect x="6" y="8.200" width="1.800" height="1.600" fill="#a8a6c8"/><ellipse cx="3.700" cy="12.700" rx="3.500" ry="2.200" fill="#7ab6ee"/><path d="M2.200 10h1.800l-.2 2.200-1.300-.3z" fill="#9a5a20"/><ellipse cx="3" cy="8.200" rx="1.900" ry="2.500" fill="#e0a264"/><path d="M1.100 7.700c-.2-2.700 3.800-2.900 3.900 0-1-1.100-2.800-1.100-3.900 0z" fill="#2a3038"/></svg>
<span class="pu" style="left:41px">C:\Users\ADMINI~1.DES\AppData\Local\...</span>
<span class="s" style="right:278.500px">51 B</span>
<span class="d" style="left:326.500px;width:130px;text-align:center">2024/4/19 15:48:27</span>
</div>
<div class="fr" style="top:330px">
<i class="cbr"><svg width="13" height="13" viewBox="0 0 13 13"><path d="M3.300 6.900L5.500 8.900 9.900 4.400" fill="none" stroke="#fff" stroke-opacity=".92" stroke-width=".95"/></svg></i>
<svg class="ic" style="left:20px;top:0" viewBox="0 0 16 16"><path d="M4.500.7h7.200l3.100 3.100v9.900H4.500z" fill="#fff" stroke="#8a8a8a" stroke-width=".9"/><path d="M11.700.7v3.100h3.100" fill="#f1f1f1" stroke="#8a8a8a" stroke-width=".7"/><path d="M4.500 13.700h10.300" stroke="#5e5e5e" stroke-width=".9"/><path d="M6 3.300h2.800M9.200 6.300h2.600M9.200 9.500h1.800" stroke="#8a86b8" stroke-width=".9"/><path d="M11 9.500h1" stroke="#f0a020" stroke-width=".9"/><rect x="6" y="5" width="2" height="1.800" fill="#3a2a80"/><rect x="6" y="8.200" width="1.800" height="1.600" fill="#a8a6c8"/><ellipse cx="3.700" cy="12.700" rx="3.500" ry="2.200" fill="#7ab6ee"/><path d="M2.200 10h1.800l-.2 2.200-1.300-.3z" fill="#9a5a20"/><ellipse cx="3" cy="8.200" rx="1.900" ry="2.500" fill="#e0a264"/><path d="M1.100 7.700c-.2-2.700 3.800-2.900 3.900 0-1-1.100-2.800-1.100-3.900 0z" fill="#2a3038"/></svg>
<span class="pu" style="left:41px">C:\Users\ADMINI~1.DES\AppData\Local\...</span>
<span class="s" style="right:278.500px">51 B</span>
<span class="d" style="left:326.500px;width:130px;text-align:center">2024/4/22 17:23:58</span>
</div>
<div class="fr" style="top:347px">
<i class="cbr"><svg width="13" height="13" viewBox="0 0 13 13"><path d="M3.300 6.900L5.500 8.900 9.900 4.400" fill="none" stroke="#fff" stroke-opacity=".92" stroke-width=".95"/></svg></i>
<svg class="ic" style="left:20px;top:0" viewBox="0 0 16 16"><path d="M4.500.7h7.200l3.100 3.100v9.900H4.500z" fill="#fff" stroke="#8a8a8a" stroke-width=".9"/><path d="M11.700.7v3.100h3.100" fill="#f1f1f1" stroke="#8a8a8a" stroke-width=".7"/><path d="M4.500 13.700h10.300" stroke="#5e5e5e" stroke-width=".9"/><path d="M6 3.300h2.800M9.200 6.300h2.600M9.200 9.500h1.800" stroke="#8a86b8" stroke-width=".9"/><path d="M11 9.500h1" stroke="#f0a020" stroke-width=".9"/><rect x="6" y="5" width="2" height="1.800" fill="#3a2a80"/><rect x="6" y="8.200" width="1.800" height="1.600" fill="#a8a6c8"/><ellipse cx="3.700" cy="12.700" rx="3.500" ry="2.200" fill="#7ab6ee"/><path d="M2.200 10h1.800l-.2 2.200-1.300-.3z" fill="#9a5a20"/><ellipse cx="3" cy="8.200" rx="1.900" ry="2.500" fill="#e0a264"/><path d="M1.100 7.700c-.2-2.700 3.800-2.900 3.900 0-1-1.100-2.800-1.100-3.900 0z" fill="#2a3038"/></svg>
<span class="pu" style="left:41px">C:\Users\ADMINI~1.DES\AppData\Local\...</span>
<span class="s" style="right:278.500px">53 B</span>
<span class="d" style="left:326.500px;width:130px;text-align:center">2024/3/29 13:17:18</span>
</div>
<div class="fr" style="top:364px">
<i class="cbr"><svg width="13" height="13" viewBox="0 0 13 13"><path d="M3.300 6.900L5.500 8.900 9.900 4.400" fill="none" stroke="#fff" stroke-opacity=".92" stroke-width=".95"/></svg></i>
<svg class="ic" style="left:20px;top:0" viewBox="0 0 16 16"><path d="M4.500.7h7.200l3.100 3.100v9.900H4.500z" fill="#fff" stroke="#8a8a8a" stroke-width=".9"/><path d="M11.700.7v3.100h3.100" fill="#f1f1f1" stroke="#8a8a8a" stroke-width=".7"/><path d="M4.500 13.700h10.300" stroke="#5e5e5e" stroke-width=".9"/><path d="M6 3.300h2.800M9.200 6.300h2.600M9.200 9.500h1.800" stroke="#8a86b8" stroke-width=".9"/><path d="M11 9.500h1" stroke="#f0a020" stroke-width=".9"/><rect x="6" y="5" width="2" height="1.800" fill="#3a2a80"/><rect x="6" y="8.200" width="1.800" height="1.600" fill="#a8a6c8"/><ellipse cx="3.700" cy="12.700" rx="3.500" ry="2.200" fill="#7ab6ee"/><path d="M2.200 10h1.800l-.2 2.200-1.300-.3z" fill="#9a5a20"/><ellipse cx="3" cy="8.200" rx="1.900" ry="2.500" fill="#e0a264"/><path d="M1.100 7.700c-.2-2.700 3.800-2.900 3.900 0-1-1.100-2.800-1.100-3.900 0z" fill="#2a3038"/></svg>
<span class="pu" style="left:41px">C:\Users\ADMINI~1.DES\AppData\Local\...</span>
<span class="s" style="right:278.500px">4.27 KB</span>
<span class="d" style="left:326.500px;width:130px;text-align:center">2024/4/19 16:36:18</span>
</div>
<div class="fr" style="top:381px">
<i class="cbr"><svg width="13" height="13" viewBox="0 0 13 13"><path d="M3.300 6.900L5.500 8.900 9.900 4.400" fill="none" stroke="#fff" stroke-opacity=".92" stroke-width=".95"/></svg></i>
<svg class="ic" style="left:20px;top:0" viewBox="0 0 16 16"><path d="M4.500.7h7.200l3.100 3.100v9.900H4.500z" fill="#fff" stroke="#8a8a8a" stroke-width=".9"/><path d="M11.700.7v3.100h3.100" fill="#f1f1f1" stroke="#8a8a8a" stroke-width=".7"/><path d="M4.500 13.700h10.300" stroke="#5e5e5e" stroke-width=".9"/><path d="M6 3.300h2.800M9.200 6.300h2.600M9.200 9.500h1.800" stroke="#8a86b8" stroke-width=".9"/><path d="M11 9.500h1" stroke="#f0a020" stroke-width=".9"/><rect x="6" y="5" width="2" height="1.800" fill="#3a2a80"/><rect x="6" y="8.200" width="1.800" height="1.600" fill="#a8a6c8"/><ellipse cx="3.700" cy="12.700" rx="3.500" ry="2.200" fill="#7ab6ee"/><path d="M2.200 10h1.800l-.2 2.200-1.300-.3z" fill="#9a5a20"/><ellipse cx="3" cy="8.200" rx="1.900" ry="2.500" fill="#e0a264"/><path d="M1.100 7.700c-.2-2.700 3.800-2.900 3.900 0-1-1.100-2.800-1.100-3.900 0z" fill="#2a3038"/></svg>
<span class="pu" style="left:41px">C:\Users\ADMINI~1.DES\AppData\Local\...</span>
<span class="s" style="right:278.500px">1.32 KB</span>
<span class="d" style="left:326.500px;width:130px;text-align:center">2024/4/18 17:04:19</span>
</div>
<div class="fr" style="top:398px">
<i class="cbr"><svg width="13" height="13" viewBox="0 0 13 13"><path d="M3.300 6.900L5.500 8.900 9.900 4.400" fill="none" stroke="#fff" stroke-opacity=".92" stroke-width=".95"/></svg></i>
<svg class="ic" style="left:20px;top:0" viewBox="0 0 16 16"><path d="M4.500.7h7.200l3.100 3.100v9.900H4.500z" fill="#fff" stroke="#8a8a8a" stroke-width=".9"/><path d="M11.700.7v3.100h3.100" fill="#f1f1f1" stroke="#8a8a8a" stroke-width=".7"/><path d="M4.500 13.700h10.300" stroke="#5e5e5e" stroke-width=".9"/><path d="M6 3.300h2.800M9.200 6.300h2.600M9.200 9.500h1.800" stroke="#8a86b8" stroke-width=".9"/><path d="M11 9.500h1" stroke="#f0a020" stroke-width=".9"/><rect x="6" y="5" width="2" height="1.800" fill="#3a2a80"/><rect x="6" y="8.200" width="1.800" height="1.600" fill="#a8a6c8"/><ellipse cx="3.700" cy="12.700" rx="3.500" ry="2.200" fill="#7ab6ee"/><path d="M2.200 10h1.800l-.2 2.200-1.300-.3z" fill="#9a5a20"/><ellipse cx="3" cy="8.200" rx="1.900" ry="2.500" fill="#e0a264"/><path d="M1.100 7.700c-.2-2.700 3.800-2.900 3.900 0-1-1.100-2.800-1.100-3.900 0z" fill="#2a3038"/></svg>
<span class="pu" style="left:41px">C:\Users\ADMINI~1.DES\AppData\Local\...</span>
<span class="s" style="right:278.500px">1.27 KB</span>
<span class="d" style="left:326.500px;width:130px;text-align:center">2024/4/18 17:04:20</span>
</div>
<div class="fr" style="top:415px">
<i class="cbr"><svg width="13" height="13" viewBox="0 0 13 13"><path d="M3.300 6.900L5.500 8.900 9.900 4.400" fill="none" stroke="#fff" stroke-opacity=".92" stroke-width=".95"/></svg></i>
<svg class="ic" style="left:20px;top:0" viewBox="0 0 16 16"><path d="M4.500.7h7.200l3.100 3.100v9.900H4.500z" fill="#fff" stroke="#8a8a8a" stroke-width=".9"/><path d="M11.700.7v3.100h3.100" fill="#f1f1f1" stroke="#8a8a8a" stroke-width=".7"/><path d="M4.500 13.700h10.300" stroke="#5e5e5e" stroke-width=".9"/><path d="M6 3.300h2.800M9.200 6.300h2.600M9.200 9.500h1.800" stroke="#8a86b8" stroke-width=".9"/><path d="M11 9.500h1" stroke="#f0a020" stroke-width=".9"/><rect x="6" y="5" width="2" height="1.800" fill="#3a2a80"/><rect x="6" y="8.200" width="1.800" height="1.600" fill="#a8a6c8"/><ellipse cx="3.700" cy="12.700" rx="3.500" ry="2.200" fill="#7ab6ee"/><path d="M2.200 10h1.800l-.2 2.200-1.300-.3z" fill="#9a5a20"/><ellipse cx="3" cy="8.200" rx="1.900" ry="2.500" fill="#e0a264"/><path d="M1.100 7.700c-.2-2.700 3.800-2.900 3.900 0-1-1.100-2.800-1.100-3.900 0z" fill="#2a3038"/></svg>
<span class="pu" style="left:41px">C:\Users\ADMINI~1.DES\AppData\Local\...</span>
<span class="s" style="right:278.500px">1.27 KB</span>
<span class="d" style="left:326.500px;width:130px;text-align:center">2024/4/18 17:04:20</span>
</div>
</div>
<div class="abs lnk" style="left:5px">检查所有</div><div class="abs lnk" style="left:60px">无需检查</div><div class="abs lnk" style="left:117px">检查默认</div>
<div class="abs lnk" style="left:246px">自定义文件和文件夹</div>
<svg class="abs" style="left:360px;top:584px" width="16" height="17" viewBox="0 0 16 17"><defs><linearGradient id="fg" x1="0" y1="0" x2="1" y2="1"><stop offset="0" stop-color="#fbe88a"/><stop offset="1" stop-color="#e0b43a"/></linearGradient></defs><path d="M.6 2.200L5.800.4l5 .8v13L3.200 16.500.6 14.300z" fill="url(#fg)" stroke="#d2a838" stroke-width=".5"/><path d="M.6 2.200l2.600 1.500v12.800" fill="none" stroke="#c89a2a" stroke-width=".6"/><circle cx="10" cy="10.600" r="3.100" fill="#f5f8fa" stroke="#8c8c8c" stroke-width="1.200"/><path d="M12.300 13l2.600 2.600" stroke="#4e4e4e" stroke-width="1.800" stroke-linecap="round"/></svg>
<div class="abs gl" style="left:379px">打开文件夹</div>
<svg class="abs" style="left:443px;top:584px" width="16" height="17" viewBox="0 0 16 17"><path d="M3.500 1.400h7.500l3.500 3.500v11.200h-11z" fill="#f3f3f3" stroke="#b9b9b9" stroke-width=".9"/><path d="M11 1.400v3.500h3.500" fill="#e6e6e6" stroke="#b9b9b9" stroke-width=".7"/><path d="M4 1.200l1.200 3M6.500.7l.3 3.200M9 1.300l-1 2.800" stroke="#f0a468" stroke-width="1"/><path d="M5.700 16V6.300c0-1.300 1.900-1.300 1.900 0v4l3.500.8c1 .2 1.300 1 1.200 1.900L11.800 16z" fill="#fff" stroke="#4a4a4a" stroke-width=".9"/><path d="M5.700 11.500l-2-1.300c-1-.5-1.800.6-1 1.500L5.700 16z" fill="#fff" stroke="#4a4a4a" stroke-width=".9"/></svg>
<div class="abs gl" style="left:461px">属性</div>
<div class="abs gl" style="left:900px">排除这个文件</div>
<div class="abs" style="left:1px;top:616px;width:982px;height:1px;background:#eaeaea"></div>
<div class="abs" style="left:846px;top:624px;width:130px;height:25px;border:1px solid #adadad;background:#fdfdfd;text-align:center;font-size:12px;line-height:25px">忽略列表</div>
</div>
</body></html>
